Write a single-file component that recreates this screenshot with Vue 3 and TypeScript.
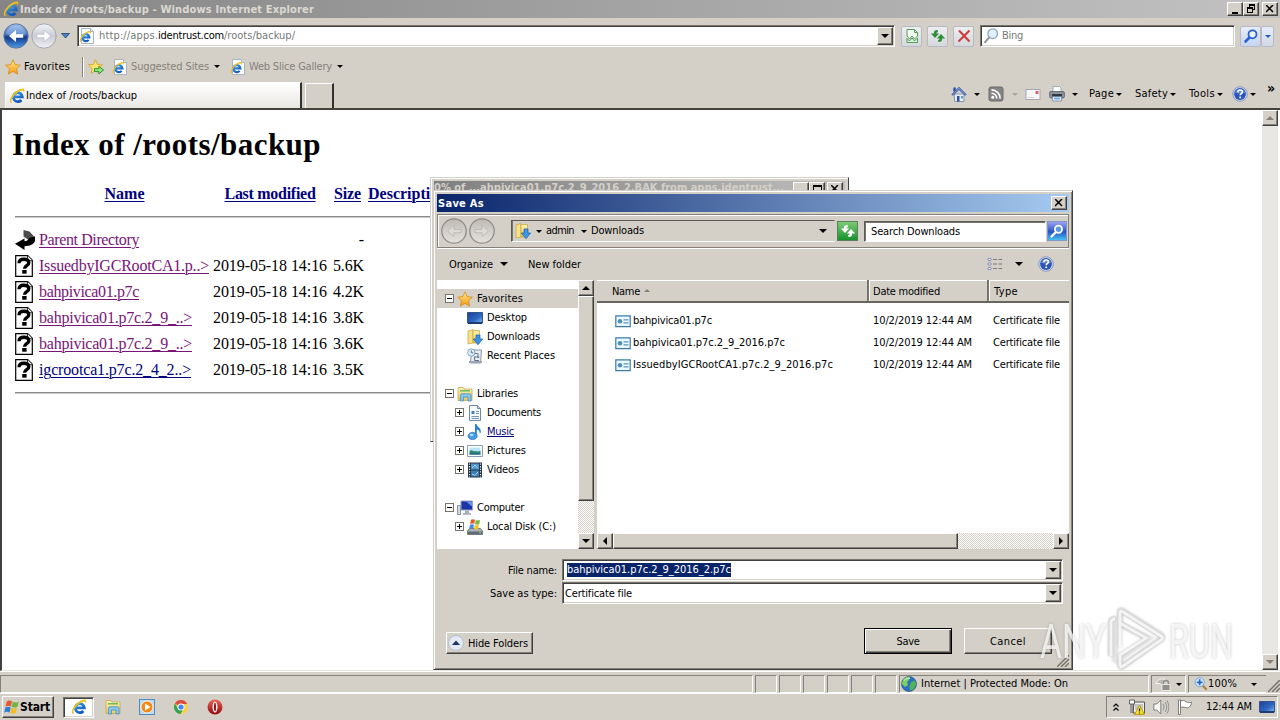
<script setup lang="ts">
interface Entry { name: string; w: number; size: string; fresh?: boolean }
interface Node { label: string; w: number; icon: string; level: number; box?: string; hot?: boolean; link?: boolean; gap?: boolean }

const vFit = {
  mounted(el: HTMLElement, binding: { value: number }) {
    const natural = el.getBoundingClientRect().width
    const count = (el.textContent ?? '').length
    if (count > 0) el.style.letterSpacing = `${(binding.value - natural) / count}px`
    el.style.width = `${binding.value}px`
  },
}

const entries: Entry[] = [
  { name: 'IssuedbyIGCRootCA1.p..>', w: 170, size: '5.6K' },
  { name: 'bahpivica01.p7c', w: 100, size: '4.2K' },
  { name: 'bahpivica01.p7c.2_9_..>', w: 153, size: '3.8K' },
  { name: 'bahpivica01.p7c.2_9_..>', w: 153, size: '3.6K' },
  { name: 'igcrootca1.p7c.2_4_2..>', w: 152, size: '3.5K', fresh: true },
]

const tree: Node[] = [
  { label: 'Favorites', w: 46, icon: 'star', level: 0, box: '-', hot: true },
  { label: 'Desktop', w: 40, icon: 'desktop', level: 1 },
  { label: 'Downloads', w: 53, icon: 'downloads', level: 1 },
  { label: 'Recent Places', w: 68, icon: 'recent', level: 1 },
  { label: '', w: 0, icon: '', level: 0, gap: true },
  { label: 'Libraries', w: 41, icon: 'folder', level: 0, box: '-' },
  { label: 'Documents', w: 54, icon: 'doc', level: 1, box: '+' },
  { label: 'Music', w: 27, icon: 'music', level: 1, box: '+', link: true },
  { label: 'Pictures', w: 39, icon: 'picture', level: 1, box: '+' },
  { label: 'Videos', w: 32, icon: 'video', level: 1, box: '+' },
  { label: '', w: 0, icon: '', level: 0, gap: true },
  { label: 'Computer', w: 47, icon: 'computer', level: 0, box: '-' },
  { label: 'Local Disk (C:)', w: 69, icon: 'disk', level: 1, box: '+' },
]

const files = [
  { name: 'bahpivica01.p7c', w: 79 },
  { name: 'bahpivica01.p7c.2_9_2016.p7c', w: 152 },
  { name: 'IssuedbyIGCRootCA1.p7c.2_9_2016.p7c', w: 200 },
]
</script>

<template>
  <div class="screen">
    <svg class="sprite" width="0" height="0">
      <defs>
        <linearGradient id="gBlue" x1="0" y1="0" x2="0" y2="1"><stop offset="0" stop-color="#9dc0ec" /><stop offset=".45" stop-color="#3c6cbc" /><stop offset=".55" stop-color="#123a8c" /><stop offset="1" stop-color="#4f9be6" /></linearGradient>
        <linearGradient id="gGrey" x1="0" y1="0" x2="0" y2="1"><stop offset="0" stop-color="#f4f5f8" /><stop offset=".5" stop-color="#c9ccd4" /><stop offset="1" stop-color="#f2f3f6" /></linearGradient>
        <linearGradient id="gFlat" x1="0" y1="0" x2="0" y2="1"><stop offset="0" stop-color="#bdbab4" /><stop offset=".5" stop-color="#d2cfc9" /><stop offset="1" stop-color="#e4e1dc" /></linearGradient>
        <linearGradient id="gStar" x1="0" y1="0" x2="0" y2="1"><stop offset="0" stop-color="#ffe98a" /><stop offset="1" stop-color="#f59a12" /></linearGradient>
        <linearGradient id="gE" gradientUnits="userSpaceOnUse" x1="4" y1="3" x2="12" y2="15"><stop offset="0" stop-color="#3fa9f0" /><stop offset="1" stop-color="#0c4db4" /></linearGradient>
        <linearGradient id="gFold" x1="0" y1="0" x2="0" y2="1"><stop offset="0" stop-color="#fdf3b4" /><stop offset="1" stop-color="#e8c95e" /></linearGradient>
        <linearGradient id="gScr" x1="0" y1="0" x2="1" y2="1"><stop offset="0" stop-color="#1c3f8e" /><stop offset=".6" stop-color="#2f68c4" /><stop offset="1" stop-color="#8ac0f4" /></linearGradient>
        <linearGradient id="gRed" x1="0" y1="0" x2="0" y2="1"><stop offset="0" stop-color="#e8645c" /><stop offset="1" stop-color="#940808" /></linearGradient>
      </defs>
      <symbol id="ie" viewBox="0 0 16 16">
        <path d="M5 8.900h8.300A4.500 4.500 0 1 0 12.300 12" fill="none" stroke="url(#gE)" stroke-width="2.800" />
        <path d="M2 15C-1 13.500 2.500 6.500 8 2.800 12 .1 15.800-.3 15.400 2.600c0 .8-.3 1.400-.7 2.100.2-1.900-.8-2.600-2.600-2C9 3.600 5 7.200 3 10.800c-1.200 2.200-1 3.600.6 3.200" fill="#efbe1c" />
      </symbol>
      <symbol id="iepage" viewBox="0 0 16 16">
        <path d="M2.500.5h9l3 3v12h-12z" fill="#fbfcfe" stroke="#a8b4c6" /><path d="M11.500.5v3h3" fill="#dde6f2" stroke="#a8b4c6" />
        <use href="#ie" x="0" y="2.500" width="12.500" height="12.500" />
      </symbol>
      <symbol id="star" viewBox="0 0 16 16"><path d="M8 .8l2.200 4.900 5.200.5-3.900 3.600 1.200 5.300L8 12.400l-4.700 2.700 1.200-5.300L.6 6.200l5.200-.5z" fill="url(#gStar)" stroke="#d58a18" stroke-width=".8" /></symbol>
      <symbol id="staradd" viewBox="0 0 16 16"><path d="M7.500.8l2 4.600 5 .5-3.700 3.500 1.100 5-4.400-2.500-4.500 2.500 1.100-5L.5 5.900l5-.5z" fill="#ffe570" stroke="#cfa01e" stroke-width=".8" /><path d="M6.500 9.600h4.300V7.300L15.600 11l-4.800 3.900v-2.400H6.500z" fill="#8ee27a" stroke="#278d2c" stroke-width=".9" /></symbol>
      <symbol id="home" viewBox="0 0 16 16"><path d="M3.500 8h9.500v7.500H3.500z" fill="#e8edf6" stroke="#8795b5" /><path d="M2.300 1.500h2.500v4H2.300z" fill="#3450a8" /><path d="M8 1.200L.8 8.500l1.200.8L8 3.600l6 5.700 1.200-.8z" fill="#6f93d8" stroke="#263f94" stroke-width=".7" /><path d="M6 10h2.500v5.500H6z" fill="#2b4fa2" /><path d="M10 10h2v2.500h-2z" fill="#57a0d6" /></symbol>
      <symbol id="rss" viewBox="0 0 16 16"><rect x="1" y="1" width="14" height="14" rx="2" fill="#858585" stroke="#6a6a6a" /><circle cx="4.800" cy="11.200" r="1.500" fill="#fff" /><path d="M3.500 7.200a5.300 5.300 0 0 1 5.300 5.300M3.500 3.900a8.600 8.600 0 0 1 8.600 8.600" fill="none" stroke="#fff" stroke-width="1.600" /></symbol>
      <symbol id="mail" viewBox="0 0 16 16"><rect x="1" y="3.500" width="14" height="10" fill="#f7f7fa" stroke="#aaa5b3" /><path d="M3 11.500h6" stroke="#d4d4df" /><rect x="10.500" y="5" width="3" height="3" fill="#d7627a" /></symbol>
      <symbol id="printer" viewBox="0 0 16 16"><path d="M4 .5h6.500L12 2v5H4z" fill="#fff" stroke="#8594a5" stroke-width=".7" /><rect x=".6" y="5.500" width="14.800" height="6.500" rx="1.500" fill="#8c939d" stroke="#555c66" stroke-width=".8" /><path d="M3 8h10v3H3z" fill="#343a44" /><path d="M3.500 10.500h9v4.500h-9z" fill="#e8f2fc" stroke="#6b7887" stroke-width=".7" /><path d="M5 12.500h6" stroke="#6ab0e4" stroke-width="2" /></symbol>
      <symbol id="help" viewBox="0 0 16 16"><circle cx="8" cy="8" r="7.300" fill="#cbd6ee" stroke="#7c8cb4" stroke-width=".8" /><circle cx="8" cy="8" r="5.900" fill="#2a55b8" /><path d="M3 6.500a5.500 5.500 0 0 1 10 0c-3 1.500-7 1.500-10 0z" fill="#7d9fe0" opacity=".7" /><path d="M5.800 6.200C5.900 4.600 7 4 8.100 4c1.300 0 2.300.8 2.300 2 0 1.700-2.200 1.700-2.200 3.200" fill="none" stroke="#fff" stroke-width="1.600" /><rect x="7.300" y="10.500" width="1.800" height="1.700" fill="#fff" /></symbol>
      <symbol id="glass" viewBox="0 0 16 16"><path d="M1.500 14.800l5-6" stroke="#8f9499" stroke-width="2" /><circle cx="9.700" cy="5.700" r="4.800" fill="#dff1fb" stroke="#8fa8b8" stroke-width="1.300" /></symbol>
      <symbol id="glassblue" viewBox="0 0 16 16"><path d="M2.500 13.500l4-4" stroke="#2c5fd2" stroke-width="2.600" stroke-linecap="round" /><circle cx="9.500" cy="6.300" r="4" fill="#e9f3fe" stroke="#2c5fd2" stroke-width="1.800" /></symbol>
      <symbol id="glasswhite" viewBox="0 0 16 16"><path d="M2.500 13.500l4-4" stroke="#fff" stroke-width="2.400" stroke-linecap="round" /><circle cx="9.500" cy="6.300" r="3.600" fill="#5b97e0" stroke="#fff" stroke-width="1.800" /></symbol>
      <symbol id="compat" viewBox="0 0 16 16"><path d="M3 1.500h7.500l3 3v3.500l-3 3-2.500-3-2.500 3-2.500-3z" fill="#f3fbf2" stroke="#4f9d58" /><path d="M10.500 1.500v3h3" fill="none" stroke="#4f9d58" /><path d="M3 14.500v-4l2.500 2.500L8 10l2.500 3 3-3v4.500z" fill="#dff3dd" stroke="#4f9d58" /></symbol>
      <symbol id="reload" viewBox="0 0 16 16"><path d="M7.500 2C5.300 1.800 3.900 2.600 3.800 5.500H.8L5 10l4.200-4.500H6.500c0-1 .4-1.500 1.600-1.600z" fill="currentColor" /><path d="M8.500 14c2.200.2 3.600-.6 3.700-3.500h3L11 6l-4.200 4.500h2.700c0 1-.4 1.500-1.600 1.600z" fill="currentColor" /></symbol>
      <symbol id="stop" viewBox="0 0 16 16"><path d="M3 2.500l10.500 11M13.500 2.500L2.500 13.500" stroke="#c8403c" stroke-width="2.100" /></symbol>
      <symbol id="orbback" viewBox="0 0 26 26"><circle cx="13" cy="13" r="12.200" fill="url(#gBlue)" stroke="#667a9c" /><path d="M3 11a10.200 10.200 0 0 1 20 0c-6 2-14 2-20 0z" fill="#c4daf5" opacity=".35" /><path d="M6 13l7-6v4.200h7.200v3.600H13V19z" fill="#fff" /></symbol>
      <symbol id="orbfwd" viewBox="0 0 26 26"><circle cx="13" cy="13" r="12.200" fill="url(#gGrey)" stroke="#a1a5ad" /><path d="M20 13l-7-6v4.200H5.800v3.600H13V19z" fill="#fff" stroke="#b3b8c6" stroke-width=".7" /></symbol>
      <symbol id="orbl" viewBox="0 0 26 26"><circle cx="13" cy="13" r="12.200" fill="url(#gFlat)" stroke="#8f8d89" stroke-width="1.300" /><path d="M6.500 13l6.500-5.500v4H20v3.200h-7v3.800z" fill="#dedbd6" stroke="#b8b5af" stroke-width=".8" /></symbol>
      <symbol id="orbr" viewBox="0 0 26 26"><circle cx="13" cy="13" r="12.200" fill="url(#gFlat)" stroke="#8f8d89" stroke-width="1.300" /><path d="M19.500 13L13 7.500v4H6v3.200h7v3.800z" fill="#dedbd6" stroke="#b8b5af" stroke-width=".8" /></symbol>
      <symbol id="parent" viewBox="0 0 20 20"><path d="M8.500 0l6 1.500L19.500 7l-5 3.500-6-4z" fill="#4c4c4c" /><path d="M14 8l6-1.500v4.500c-1.500 3.500-5 5-10.500 5.200V20L0 13.800 9.500 8.500v2.700c2.500 0 4-1.200 4.500-3.200z" fill="#000" /></symbol>
      <symbol id="unknown" viewBox="0 0 18 22"><path d="M.7.700h12l4.600 4.600v16H.7z" fill="#fff" stroke="#000" stroke-width="1.200" /><path d="M12.500.700v5h5" fill="#fff" stroke="#000" stroke-width=".8" /><path d="M4 8.200c.1-2.800 2-4 4.800-4 3.200 0 5 1.300 5 3.500 0 3.100-4.300 2.800-4.300 6" fill="none" stroke="#000" stroke-width="3.400" /><rect x="7.200" y="15" width="4.400" height="3.700" fill="#000" /></symbol>
      <symbol id="desktop" viewBox="0 0 16 16"><path d="M.5 2.500h15v10.500H.5z" fill="url(#gScr)" stroke="#33548c" /><path d="M1 12h14v2H1z" fill="#1f3c70" /></symbol>
      <symbol id="downloads" viewBox="0 0 16 16"><path d="M1 2l5-1.500V14L1 15z" fill="#f7e08a" stroke="#c9a23a" stroke-width=".7" /><path d="M6 1.500h6.500V14H6z" fill="url(#gFold)" stroke="#c9a23a" stroke-width=".7" /><path d="M9 6h4v4h2.700L11 15.700 6.300 10H9z" fill="#3a96e4" stroke="#1c5dae" stroke-width=".7" /></symbol>
      <symbol id="recent" viewBox="0 0 16 16"><path d="M4.500 2h10l-1 13h-10z" fill="#e9edf1" stroke="#7f8b99" stroke-width=".9" /><circle cx="4.300" cy="4.500" r="3.700" fill="#dfeffa" stroke="#71a0c4" stroke-width=".9" /><path d="M4.300 2.300v2.500h2M7 9h5.500M8 5.500h2.500M11 5v5M7.500 9v3.500H12" fill="none" stroke="#61758d" stroke-width="1" /><path d="M2 13h13v2H2z" fill="#9aa6b2" /></symbol>
      <symbol id="folder" viewBox="0 0 16 16"><path d="M1 1.500h5l1 1.500h8v11.500H1z" fill="url(#gFold)" stroke="#c8a848" stroke-width=".8" /><path d="M3 4h10v1.500H3z" fill="#69bb65" /><path d="M3.500 15V9.300c0-1 .6-1.500 1.500-1.500h7.500c.9 0 1.500.5 1.500 1.500V15h-3v-4H6.500v4z" fill="#88c7ef" stroke="#468dc0" stroke-width=".8" /></symbol>
      <symbol id="doc" viewBox="0 0 16 16"><path d="M2.500.5h8l3 3v12h-11z" fill="#f6f9fc" stroke="#7189a5" /><path d="M10.500.5v3h3" fill="#c9d8ea" stroke="#7189a5" /><path d="M4.500 6h3v3h-3z" fill="#477fbd" /><path d="M9 6.500h3M9 8.500h3M4.500 11.500H12M4.500 13.500H12" stroke="#7697bb" /></symbol>
      <symbol id="music" viewBox="0 0 16 16"><path d="M8 12V0h1.500c.4 3 4.500 3.600 4.300 7.400-.1 1-.4 1.900-1 2.700.4-3-1.200-4.200-3-4.600V12" fill="#2b7ed2" /><ellipse cx="5.600" cy="12" rx="4.600" ry="3.600" fill="#3e9ee8" stroke="#2265b4" stroke-width=".7" /><ellipse cx="4.600" cy="11" rx="1.800" ry="1.200" fill="#b5e0fa" /></symbol>
      <symbol id="picture" viewBox="0 0 16 16"><path d="M.5 2.500h15v11H.5z" fill="#fff" stroke="#8b9daf" /><path d="M2.500 4.500h11v7h-11z" fill="#bae5f7" /><path d="M2.500 8c2-2 4 1 6 0 2 1 3 0 5 0v3.500h-11z" fill="#2f8577" /><path d="M2.500 10.500h11v1h-11z" fill="#1f5f8a" /></symbol>
      <symbol id="video" viewBox="0 0 16 16"><path d="M1 .5h14v15H1z" fill="#25303d" /><path d="M4 1.500h8v6H4z" fill="#4c96d2" /><path d="M4 8.500h8v6H4z" fill="#3a7fb8" /><path d="M5 6l3-3 3 3.500M5 12l3 1.500L11 10" stroke="#a8d6ea" fill="none" /><path d="M2.500 1.500v14M13.500 1.500v14" stroke="#e8ecf0" stroke-width="1.200" stroke-dasharray="1.300 1.300" /></symbol>
      <symbol id="computer" viewBox="0 0 16 16"><path d="M.5 5.500h3v9h-3z" fill="#d4dbe2" stroke="#6e7984" stroke-width=".8" /><path d="M4 1h11.500v9H4z" fill="#1b34a8" stroke="#92a2bc" /><path d="M9 1.500h6v5z" fill="#6790e8" /><path d="M8 10.500h4V13H8zM6 13h8v1.700H6z" fill="#a5afba" /></symbol>
      <symbol id="disk" viewBox="0 0 16 16"><path d="M2.500 9.500h11l2 2.500v3.500H.5V12z" fill="#aab2b8" stroke="#5b666f" stroke-width=".8" /><path d="M1 12.500h14v2.500H1z" fill="#5e6b74" /><circle cx="13" cy="13.700" r=".8" fill="#7cf06a" /><path d="M4 .8c1.500-.9 2.700-.7 4 0L7.200 5c-1.300-.7-2.700-.6-4 0z" fill="#e8582c" /><path d="M8.800 1.100c1.300.7 2.700.6 4.200 0L12.200 5.300c-1.300.7-2.700.6-4.200 0z" fill="#78b83c" /><path d="M3 5.700c1.500-.7 2.700-.7 4 0l-.8 4c-1.300-.6-2.700-.6-4 0z" fill="#3e8edc" /><path d="M7.800 6c1.300.7 2.700.6 4.200 0L11.200 10c-1.300.6-2.700.6-4.200 0z" fill="#f5c328" /></symbol>
      <symbol id="cert" viewBox="0 0 16 16"><path d="M.8 2.800h14.400v10.900H.8z" fill="#edf7fe" stroke="#397ca8" stroke-width="1.200" /><circle cx="5" cy="8.200" r="2.300" fill="#4b91bf" /><path d="M8.500 6.800h5M8.500 9.800h5" stroke="#5b97bb" stroke-width="1.300" /></symbol>
      <symbol id="views" viewBox="0 0 16 16"><path d="M1 2.500h3v2H1zM1 7h3v2H1zM1 11.500h3v2H1z" fill="#fff" stroke="#8292b8" /><path d="M6 3.500h4M11.500 3.500H15M6 8h4M11.500 8H15M6 12.500h4M11.500 12.500H15" stroke="#77797f" stroke-width="1.200" /></symbol>
      <symbol id="up" viewBox="0 0 16 16"><circle cx="8" cy="8" r="7.500" fill="#e3eaf4" stroke="#a8b7ce" stroke-width=".8" /><path d="M4 10l4-4.500L12 10z" fill="#1c3764" /></symbol>
      <symbol id="win" viewBox="0 0 16 16"><path d="M2.700 2.500C4.700 1 6.200 1.200 8 2.300L6.900 7.500C5 6.400 3.500 6.300 1.600 7.500z" fill="#e2582f" /><path d="M8.800 2.800c2 1.100 3.700 1 5.900-.1l-1.300 5c-2 1.100-3.800 1.100-5.700.1z" fill="#6fb440" /><path d="M1.400 8.500c1.900-1.200 3.500-1.100 5.300 0l-1.200 5.200C3.700 12.600 2.100 12.500.2 13.700z" fill="#2f7ed6" /><path d="M7.500 8.800c1.900 1.100 3.600 1 5.600 0l-1.200 5c-2 1.100-3.700 1.200-5.600.1z" fill="#f4bd24" /></symbol>
      <symbol id="wmp" viewBox="0 0 16 16"><rect x=".5" y=".5" width="15" height="15" fill="#b9dbf4" stroke="#518cc0" /><circle cx="8" cy="8" r="6" fill="#f28a17" stroke="#fff" stroke-width=".8" /><path d="M6 4.500L11.500 8 6 11.500z" fill="#fff" /></symbol>
      <symbol id="chrome" viewBox="0 0 16 16"><circle cx="8" cy="8" r="7" fill="#fad141" /><path d="M8 8L1.900 4.500A7 7 0 0 1 14.200 5H8z" fill="#dd4b3e" /><path d="M1.900 4.500A7 7 0 0 0 7.500 15L10.800 9.500 8 8 5 9.500z" fill="#34a353" /><circle cx="8" cy="8" r="3.500" fill="#fff" /><circle cx="8" cy="8" r="2.600" fill="#4285f4" /></symbol>
      <symbol id="opera" viewBox="0 0 16 16"><circle cx="8" cy="8" r="7.500" fill="url(#gRed)" /><ellipse cx="8" cy="8" rx="2.500" ry="5.600" fill="#f8eeee" /><ellipse cx="8" cy="8" rx="1" ry="4.300" fill="#8e1212" /></symbol>
      <symbol id="globe" viewBox="0 0 16 16"><circle cx="8" cy="8" r="7.500" fill="#2b6fc2" stroke="#224c7e" stroke-width=".6" /><path d="M2 4c2-3 5-3.500 7-3l-1 3-2 2 1 3-3 2-2-2-1.300-1z" fill="#7bd15c" /><path d="M10 6l4-1.500 1 4-2.500 5-3.500 1-.5-4z" fill="#53b454" /><path d="M3 4.500c2-2 4-2.500 6-2" stroke="#cdf0fb" fill="none" /></symbol>
      <symbol id="shield" viewBox="0 0 16 16"><path d="M.8 7.500c2-4 4.700-4.700 9-4.500l-1 5.500-2 .5-2-1.500z" fill="#bbb9b5" stroke="#fff" stroke-width=".8" /><path d="M8.500 9V7a2.500 2.500 0 0 1 5 0v2" fill="none" stroke="#8e8c88" stroke-width="1.400" /><path d="M7 8.500h8v6H7z" fill="#92908c" stroke="#fff" stroke-width=".7" /></symbol>
      <symbol id="zoom" viewBox="0 0 16 16"><path d="M9.500 9.500l5 5" stroke="#b07f44" stroke-width="2.400" /><circle cx="6.500" cy="6" r="5.200" fill="#d7eafd" stroke="#6f9ed0" /><path d="M6.500 2.700v6.600M3.200 6h6.600" stroke="#2468ce" stroke-width="2" /></symbol>
      <symbol id="net" viewBox="0 0 16 16"><path d="M5 3h10.500v11H4z" fill="#eee" stroke="#555" /><path d="M6 5h8v6H6z" fill="#c5c5c0" /><path d="M.5 1h5v4h-5zM2 5v9M4 5v9" fill="#fff" stroke="#555" stroke-width=".9" /><path d="M10.500 6.500l5 9h-10z" fill="#f7e226" stroke="#ad8a08" stroke-width=".8" /><path d="M10.500 9.500v3M10.500 13.500v1" stroke="#222" stroke-width="1.200" /></symbol>
      <symbol id="sound" viewBox="0 0 16 16"><path d="M.8 5h3l4-4v14l-4-4h-3z" fill="#f5f5f3" stroke="#777" stroke-width=".9" /><path d="M10 5c1.200 1.800 1.200 4.200 0 6M12 3c2.200 3 2.200 7 0 10M14 1.500c2.400 4 2.400 9 0 13" stroke="#888" fill="none" stroke-width=".9" /></symbol>
      <symbol id="flag" viewBox="0 0 16 16"><path d="M1.500 1h2v14.500h-2z" fill="#fff" stroke="#666" stroke-width=".8" /><path d="M3.500 2c2-1 4.500-.5 5.500.8 1.500 1 4 1 5.500.4-.2 3-2 5.800-4.500 5.600-1.500-.1-4-1.500-6.500-.3z" fill="#fff" stroke="#666" stroke-width=".8" /></symbol>
    </svg>

    <header class="titlebar">
      <svg class="ic"><use href="#ie" /></svg>
      <span v-fit="294" class="t bold">Index of /roots/backup - Windows Internet Explorer</span>
      <div class="caption">
        <span class="cap"><i class="g-min" /></span>
        <span class="cap"><i class="g-rest a" /><i class="g-rest b" /></span>
        <span class="cap far"><svg viewBox="0 0 8 8"><path d="M0 0l7 7M7 0L0 7" /></svg></span>
      </div>
    </header>

    <div class="nav">
      <svg class="orb"><use href="#orbback" /></svg>
      <svg class="orb fwd"><use href="#orbfwd" /></svg>
      <svg class="navdrop" viewBox="0 0 9 6"><path d="M.5.5h8L4.500 5z" /></svg>
      <div class="address sunk">
        <svg class="ic"><use href="#iepage" /></svg>
        <span class="url"><span v-fit="59" class="t">http://apps.</span><span v-fit="66" class="t host">identrust.com</span><span v-fit="71" class="t">/roots/backup/</span></span>
        <span class="combo"><i class="dn" /></span>
      </div>
      <span class="tool first"><svg class="ic"><use href="#compat" /></svg></span>
      <span class="tool green"><svg class="ic"><use href="#reload" /></svg></span>
      <span class="tool"><svg class="ic"><use href="#stop" /></svg></span>
      <div class="bing sunk"><svg class="ic"><use href="#glass" /></svg><span v-fit="21" class="t">Bing</span></div>
      <span class="tool go"><svg class="ic"><use href="#glassblue" /></svg></span>
      <span class="tool drop"><i class="dn blue" /></span>
    </div>

    <div class="favbar">
      <svg class="ic"><use href="#star" /></svg>
      <span v-fit="46" class="t">Favorites</span>
      <i class="vsep" />
      <svg class="ic add"><use href="#staradd" /></svg>
      <svg class="ic pg"><use href="#iepage" /></svg>
      <span v-fit="78" class="t dim">Suggested Sites</span><i class="dn sm" />
      <svg class="ic pg2"><use href="#iepage" /></svg>
      <span v-fit="83" class="t dim">Web Slice Gallery</span><i class="dn sm" />
    </div>

    <div class="tabrow">
      <div class="tab"><svg class="ic"><use href="#ie" /></svg><span v-fit="111" class="t">Index of /roots/backup</span></div>
      <div class="newtab" />
      <div class="cmds">
        <svg class="ic"><use href="#home" /></svg><i class="dn sm c1" />
        <svg class="ic c2"><use href="#rss" /></svg><i class="dn sm c3 grey" />
        <svg class="ic c4"><use href="#mail" /></svg>
        <svg class="ic c5"><use href="#printer" /></svg><i class="dn sm c1" />
        <span v-fit="25" class="t c6">Page</span><i class="dn sm c7" />
        <span v-fit="33" class="t c8">Safety</span><i class="dn sm c7" />
        <span v-fit="26" class="t c8">Tools</span><i class="dn sm c7" />
        <svg class="ic c9"><use href="#help" /></svg><i class="dn sm c10" />
        <span class="t more">»</span>
      </div>
    </div>

    <main class="view">
      <article class="page">
        <h1><span v-fit="309" class="t">Index of /roots/backup</span></h1>
        <div class="row head">
          <span /><span class="mid"><a v-fit="40" class="t">Name</a></span><span class="mid"><a v-fit="91" class="t">Last modified</a></span><span class="end"><a v-fit="27" class="t">Size</a></span><span class="desc"><a class="t">Descripti</a></span>
        </div>
        <hr>
        <div class="row par">
          <svg class="pic wide"><use href="#parent" /></svg><span><a v-fit="100" class="t">Parent Directory</a></span><span /><span class="end t">-</span>
        </div>
        <div v-for="(e, i) in entries" :key="i" class="row">
          <svg class="pic"><use href="#unknown" /></svg><span><a v-fit="e.w" class="t" :class="{ fresh: e.fresh }">{{ e.name }}</a></span><span><span v-fit="114" class="t">2019-05-18 14:16</span></span><span class="end"><span v-fit="31" class="t">{{ e.size }}</span></span>
        </div>
        <hr class="last">
      </article>
      <div class="vscroll"><span class="sb"><i class="upm" /></span><span class="sb"><i class="dn off" /></span></div>
    </main>

    <footer class="status">
      <span class="cell grow" /><span v-for="n in 6" :key="n" class="cell tiny" />
      <span class="cell zone"><svg class="ic"><use href="#globe" /></svg><span v-fit="147" class="t">Internet | Protected Mode: On</span></span>
      <span class="cell lock"><svg class="ic"><use href="#shield" /></svg><i class="dn sm" /></span>
      <span class="cell pct"><svg class="ic z"><use href="#zoom" /></svg><span v-fit="29" class="t">100%</span><i class="dn sm" /></span>
      <svg class="grip" viewBox="0 0 12 12"><path d="M0 12L12 0M4 12l8-8M8 12l4-4" /></svg>
    </footer>

    <footer class="taskbar">
      <span class="start raised"><svg class="ic"><use href="#win" /></svg><b v-fit="30" class="t">Start</b></span>
      <span class="pinned sunk"><svg class="ic"><use href="#ie" /></svg></span>
      <svg class="ic k1"><use href="#folder" /></svg>
      <svg class="ic k2"><use href="#wmp" /></svg>
      <svg class="ic k2"><use href="#chrome" /></svg>
      <svg class="ic k2"><use href="#opera" /></svg>
      <div class="tray">
        <svg class="chev" viewBox="0 0 6 8"><path d="M.5 3.500L3 1l2.500 2.500M.5 7.500L3 5l2.500 2.500" /></svg>
        <svg class="ic n1"><use href="#net" /></svg><svg class="ic n2"><use href="#sound" /></svg><svg class="ic n2"><use href="#flag" /></svg>
        <span v-fit="46" class="t">12:44 AM</span>
        <svg class="ic n3"><use href="#desktop" /></svg>
      </div>
    </footer>

    <section class="progress">
      <div class="ptitle"><span v-fit="350" class="t bold">0% of ...ahpivica01.p7c.2_9_2016_2.BAK from apps.identrust...</span><span class="cap" /><span class="cap"><i class="g-max" /></span><span class="cap pfar"><svg viewBox="0 0 8 8"><path d="M0 0l7 7M7 0L0 7" /></svg></span></div>
    </section>

    <section class="dialog">
      <div class="dtitle"><b v-fit="46" class="t">Save As</b><span class="cap"><svg viewBox="0 0 8 8"><path d="M0 0l7 7M7 0L0 7" /></svg></span></div>
      <div class="dnav">
        <div class="orbs"><svg class="orb"><use href="#orbl" /></svg><svg class="orb"><use href="#orbr" /></svg></div>
        <div class="crumbs">
          <svg class="ic"><use href="#downloads" /></svg><i class="dn sm x1" /><span v-fit="28" class="t">admin</span><i class="dn sm x2" /><span v-fit="53" class="t">Downloads</span><i class="dn x3" />
        </div>
        <span class="refresh"><svg class="ic"><use href="#reload" /></svg></span>
        <div class="find"><span v-fit="89" class="t">Search Downloads</span></div>
        <span class="findgo"><svg class="ic"><use href="#glasswhite" /></svg></span>
      </div>
      <div class="dtools">
        <span v-fit="44" class="t">Organize</span><i class="dn o1" /><span v-fit="53" class="t o2">New folder</span>
        <svg class="ic o3"><use href="#views" /></svg><i class="dn o4" /><svg class="ic o5"><use href="#help" /></svg>
      </div>
      <div class="panes">
        <div class="tree">
          <div v-for="(n, i) in tree" :key="i" class="node" :class="{ hot: n.hot, child: n.level === 1 }">
            <template v-if="!n.gap">
              <span class="ex" :class="{ none: !n.box, plus: n.box === '+' }" />
              <svg class="ic"><use :href="`#${n.icon}`" /></svg>
              <span v-fit="n.w" class="t" :class="{ link: n.link }">{{ n.label }}</span>
            </template>
          </div>
        </div>
        <div class="tscroll"><span class="sb"><i class="upm black" /></span><span class="thumb" /><span class="sb end"><i class="dn" /></span></div>
        <div class="list">
          <div class="cols"><span class="col cn"><span v-fit="28" class="t">Name</span><i class="upm tinyup" /></span><span class="col cd"><span v-fit="67" class="t">Date modified</span></span><span class="col ct"><span v-fit="24" class="t">Type</span></span></div>
          <div class="files">
            <div v-for="f in files" :key="f.name" class="file"><svg class="ic"><use href="#cert" /></svg><span class="fn"><span v-fit="f.w" class="t">{{ f.name }}</span></span><span class="fd"><span v-fit="99" class="t">10/2/2019 12:44 AM</span></span><span v-fit="67" class="t">Certificate file</span></div>
          </div>
          <div class="hscroll"><span class="sb"><i class="lf" /></span><span class="thumb" /><span class="sb end"><i class="rt" /></span></div>
        </div>
      </div>
      <div class="fields">
        <span v-fit="49" class="t">File name:</span><div class="input sunk"><span class="sel"><span v-fit="164" class="t">bahpivica01.p7c.2_9_2016_2.p7c</span></span><span class="combo"><i class="dn" /></span></div>
        <span v-fit="67" class="t">Save as type:</span><div class="input sunk"><span v-fit="67" class="t">Certificate file</span><span class="combo"><i class="dn" /></span></div>
      </div>
      <div class="actions">
        <span class="hide raised"><svg class="ic"><use href="#up" /></svg><span v-fit="60" class="t">Hide Folders</span></span>
        <span class="btn default"><span v-fit="23" class="t">Save</span></span>
        <span class="btn raised"><span v-fit="36" class="t">Cancel</span></span>
      </div>
      <svg class="grip dgrip" viewBox="0 0 12 12"><path d="M0 12L12 0M4 12l8-8M8 12l4-4" /></svg>
    </section>

    <svg class="mark" viewBox="0 0 240 70">
      <path class="glow" d="M82 6q0-3 3-1l38 24q3 2 0 4L85 60q-3 2-3-2v-6l28-20-28-14zM73 50V16q0-3 4-3v40l6 4" />
      <path class="tri" d="M82 18V7q0-3 3-1l38 24q3 2 0 4L85 60q-3 2-3-2v-9l26-17-26-15v24M73 50V17q0-4 4-4" />
      <g class="face"><text x="2" y="52" textLength="66" lengthAdjust="spacingAndGlyphs">ANY</text><text x="131" y="52" textLength="64" lengthAdjust="spacingAndGlyphs">RUN</text></g>
    </svg>
  </div>
</template>

<style>
html, body { margin: 0; background: #d4d0c8; overflow: hidden; }
</style>

<style scoped>
* { box-sizing: border-box; }
.screen { position: relative; width: 1280px; height: 720px; overflow: hidden; display: flex; flex-direction: column; background: #d4d0c8; color: #000; font: 11px/14px "DejaVu Sans Condensed", "DejaVu Sans", sans-serif; }
.sprite { position: absolute; }
.t { display: inline-block; white-space: pre; flex: none; }
.bold { font-weight: bold; }
.ic { width: 16px; height: 16px; flex: none; display: block; }
.dn { flex: none; width: 0; height: 0; border: 4px solid transparent; border-top-color: #000; border-bottom: 0; }
.dn.sm { border-width: 3px; border-bottom: 0; }
.dn.grey { border-top-color: #aaa69f; }
.dn.off { border-top-color: #858179; }
.dn.blue { border-width: 3px; border-bottom: 0; border-top-color: #2859b5; }
.upm { width: 0; height: 0; border: 4px solid transparent; border-bottom-color: #858179; border-top: 0; }
.upm.black { border-bottom-color: #000; }
.upm.tinyup { border-width: 3px; border-top: 0; margin: -3px 0 0 4px; }
.lf { width: 0; height: 0; border: 4px solid transparent; border-right-color: #000; border-left: 0; }
.rt { width: 0; height: 0; border: 4px solid transparent; border-left-color: #000; border-right: 0; }
.sunk { border: 1px solid; border-color: #78756f #fff #fff #78756f; box-shadow: inset 1px 1px #404040, inset -1px -1px #d4d0c8; background: #fff; }
.raised, .sb, .thumb, .cap, .combo { background: #d4d0c8; border: 1px solid; border-color: #fff #404040 #404040 #fff; box-shadow: inset -1px -1px #858179; }
.sb, .cap, .combo { display: flex; align-items: center; justify-content: center; flex: none; }
.sb { width: 16px; height: 16px; }
.cap { width: 16px; height: 14px; position: relative; }
.cap svg { width: 8px; height: 8px; stroke: #000; stroke-width: 1.500; fill: none; }

.titlebar { height: 18px; flex: none; display: flex; align-items: center; padding: 0 2px 0 3px; background: linear-gradient(90deg, #858585, #c2c2c2); color: #dcd9d3; }
.titlebar .t { margin: 1px 0 0 1px; }
.caption { margin-left: auto; display: flex; }
.far { margin-left: 3px; }
.g-min { width: 6px; height: 2px; background: #000; margin-top: 7px; }
.g-rest { position: absolute; width: 6px; height: 6px; border: 1px solid #000; border-top-width: 2px; background: #d4d0c8; }
.g-rest.a { left: 5px; top: 1px; }
.g-rest.b { left: 3px; top: 4px; }
.g-max { width: 9px; height: 9px; border: 1px solid #000; border-top-width: 2px; }

.nav { height: 36px; flex: none; display: flex; align-items: center; padding-left: 3px; }
.orb { width: 26px; height: 26px; flex: none; }
.fwd { margin-left: 2px; }
.navdrop { width: 9px; height: 6px; margin-left: 4px; fill: #4583c4; stroke: #1f4373; stroke-width: .8; }
.address { width: 818px; height: 22px; margin-left: 7px; display: flex; align-items: center; padding: 0 1px; color: #777; }
.url { margin-left: 4px; display: flex; }
.host { color: #000; }
.combo { width: 16px; height: 18px; margin-left: auto; }
.tool { width: 21px; height: 21px; flex: none; margin-left: 5px; display: flex; align-items: center; justify-content: center; border: 1px solid #b7bac3; border-radius: 2px; background: linear-gradient(#edeef0, #d7d8de); }
.tool.first { margin-left: 6px; }
.green { color: #2f8f38; }
.bing { width: 255px; height: 22px; margin-left: 6px; display: flex; align-items: center; padding-left: 2px; color: #777; }
.bing .t { margin-left: 3px; }
.go { background: linear-gradient(#e6edfa, #c6d4ee); }
.drop { width: 13px; margin-left: 0; background: linear-gradient(#e6edfa, #d2d8e6); }

.favbar { height: 25px; flex: none; display: flex; align-items: center; padding-left: 5px; }
.favbar > .t { margin-left: 3px; }
.vsep { width: 2px; height: 20px; margin-left: 12px; border-left: 1px solid #85827c; background: #fff; }
.add { margin-left: 4px; }
.pg { margin-left: 8px; }
.pg2 { margin-left: 10px; }
.favbar .dim { color: #85817a; margin: 1px 0 0 3px; }
.favbar .dn { margin-left: 5px; }

.tabrow { height: 29px; flex: none; display: flex; align-items: flex-end; padding-left: 5px; }
.tab { width: 297px; height: 26px; display: flex; align-items: center; padding-left: 3px; background: linear-gradient(#fff, #e9e7e3); border: 1px solid #fff; border-right: 2px solid #33312e; border-bottom: 0; }
.tab .t { margin: 1px 0 0 1px; }
.newtab { width: 29px; height: 25px; margin-left: 3px; border: 1px solid #fff; border-right: 2px solid #33312e; border-bottom: 0; }
.cmds { display: flex; align-items: center; height: 28px; margin-left: 617px; }
.c1 { margin-left: 7px; } .c2 { margin-left: 8px; } .c3 { margin-left: 8px; } .c4 { margin-left: 7px; } .c5 { margin-left: 8px; }
.c6 { margin-left: 11px; } .c7 { margin-left: 2px; } .c8 { margin-left: 13px; } .c9 { margin-left: 9px; } .c10 { margin-left: 2px; }
.more { margin: -12px 0 0 11px; font-size: 14px; font-weight: bold; }

.view { height: 563px; flex: none; display: flex; background: #fff; border: 2px solid #404040; border-right: 0; border-bottom: 1px solid #e8e5df; border-top: 2px solid #45423e; }
.page { flex: 1; padding: 18px 0 0 10px; font: 16px/20px "Liberation Serif", "Times New Roman", serif; }
.page h1 { margin: 0; height: 36px; font-size: 31px; line-height: 34px; }
.page hr { width: 416px; height: 2px; margin: 0 0 0 3px; border: 0; background: #8a8a8a; border-bottom: 1px solid #c9c9c9; }
.page hr.last { margin-top: 9px; }
.row { display: grid; grid-template-columns: 24px 171px 117px 37px 62px; height: 26px; align-items: center; margin-left: 3px; width: 411px; }
.row.head { height: 52px; padding: 8px 0 0; font-weight: bold; }
.row.head a { color: #000080; }
.row.par { height: 26px; margin-top: 9px; }
.row a { text-decoration: underline; text-underline-offset: 2px; text-decoration-thickness: 1px; color: #7a1478; }
.row a.fresh { color: #000080; }
.mid { text-align: center; }
.row > span:nth-child(3) { padding-left: 3px; }
.end { text-align: right; }
.row.head .end { padding-right: 3px; }
.desc { padding-left: 4px; }
.pic { width: 18px; height: 22px; }
.pic.wide { width: 20px; height: 20px; }
.vscroll { width: 16px; height: 560px; margin-right: 2px; flex: none; display: flex; flex-direction: column; justify-content: space-between; background: #e9e7e3; }

.status { height: 23px; flex: none; display: flex; padding-top: 3px; gap: 2px; border-bottom: 1px solid #fff; border-top: 1px solid #fff; }
.cell { height: 18px; display: flex; align-items: center; border: 1px solid; border-color: #85817a #fff #fff #85817a; }
.grow { width: 753px; } .tiny { width: 22px; }
.zone { width: 250px; padding-left: 1px; } .zone .t { margin-left: 4px; }
.lock { width: 35px; padding-left: 3px; gap: 5px; }
.pct { width: 78px; border-right: 0; padding-left: 5px; }
.z { width: 14px; height: 14px; } .pct .dn { margin-left: 14px; }
.grip { width: 12px; height: 12px; align-self: flex-end; stroke: #77746e; stroke-width: 1.500; margin-bottom: 1px; }

.taskbar { height: 26px; flex: none; display: flex; align-items: center; padding-left: 2px; }
.start { width: 52px; height: 22px; display: flex; align-items: center; padding-left: 1px; }
.start .t { font-size: 12px; }
.pinned { width: 31px; height: 21px; margin-left: 9px; display: flex; align-items: center; justify-content: center; }
.k1 { margin-left: 11px; } .k2 { margin-left: 18px; }
.tray { width: 172px; height: 22px; margin: 0 2px 0 auto; display: flex; align-items: center; border: 1px solid; border-color: #85817a #fff #fff #85817a; padding-left: 6px; }
.chev { width: 6px; height: 8px; fill: none; stroke: #000; stroke-width: 1.200; }
.n1 { margin-left: 10px; } .n2 { margin-left: 8px; }
.tray .t { margin-left: 13px; } .n3 { margin-left: 7px; }

.progress { position: absolute; left: 430px; top: 177px; width: 419px; height: 265px; background: #d4d0c8; border: 1px solid; border-color: #d4d0c8 #404040 #404040 #d4d0c8; box-shadow: inset 1px 1px #fff; padding: 3px; }
.ptitle { height: 18px; display: flex; align-items: flex-start; background: linear-gradient(90deg, #808080, #bdbdbd); color: #d4d0c8; padding-right: 2px; }
.ptitle .t { margin-right: auto; }
.ptitle .cap { height: 14px; margin-top: 1px; }
.pfar { margin-left: 2px; }

.dialog { position: absolute; left: 433px; top: 190px; width: 640px; height: 480px; background: #d4d0c8; border: 1px solid; border-color: #d4d0c8 #404040 #404040 #d4d0c8; box-shadow: inset 1px 1px #fff, inset -1px -1px #858179; padding: 3px; display: flex; flex-direction: column; }
.dtitle { height: 18px; flex: none; display: flex; align-items: center; justify-content: space-between; padding: 0 2px 0 1px; color: #fff; background: linear-gradient(90deg, #0a246a, #a6caf0); }
.dtitle .t { margin-top: 1px; }
.dnav { height: 34px; flex: none; margin-top: 2px; border: 1px solid #85817a; box-shadow: inset 1px 1px #fff, 0 1px #fff; display: flex; align-items: center; padding-left: 3px; }
.orbs { display: flex; gap: 2px; }
.crumbs { width: 324px; height: 22px; margin-left: 16px; display: flex; align-items: center; border: 1px solid; border-color: #5e5b56 #d4d0c8 #fff #5e5b56; box-shadow: inset 1px 0 #77746e; padding-left: 3px; }
.x1 { margin-left: 5px; } .crumbs .t { margin-left: 4px; } .x2 { margin-left: 7px; } .x3 { margin: 0 7px 0 auto; }
.refresh { width: 21px; height: 20px; margin-left: 2px; display: flex; align-items: center; justify-content: center; color: #fff; background: linear-gradient(#7ecb75, #16922b); border: 1px solid #58805a; }
.find { width: 182px; height: 21px; margin-left: 6px; display: flex; align-items: center; padding: 1px 0 0 6px; background: #fff; border: 1px solid; border-color: #5e5b56 #fff #fff #5e5b56; box-shadow: inset 1px 1px #77746e; }
.findgo { width: 20px; height: 20px; margin-left: 1px; display: flex; align-items: center; justify-content: center; background: linear-gradient(#9b9ff0, #2455c8 55%, #48c0ee); border: 1px solid #7e98c8; }
.dtools { height: 32px; flex: none; display: flex; align-items: center; padding-left: 12px; }
.dtools .t { margin-top: 1px; }
.o1 { margin-left: 7px; } .o2 { margin-left: 20px; } .o3 { margin-left: 406px; } .o4 { margin-left: 12px; } .o5 { margin-left: 15px; }
.panes { height: 269px; flex: none; display: flex; }
.tree { width: 141px; background: #fff; padding-top: 9px; }
.node { height: 19px; display: flex; align-items: center; padding-left: 8px; }
.node.child { padding-left: 18px; }
.hot { background: #d4d0c8; }
.ex { width: 9px; height: 9px; flex: none; border: 1px solid #77746e; margin-right: 3px; background: linear-gradient(#000, #000) center / 5px 1px no-repeat #fff; }
.ex.plus { background: linear-gradient(#000, #000) center / 5px 1px no-repeat, linear-gradient(#000, #000) center / 1px 5px no-repeat #fff; }
.ex.none { visibility: hidden; }
.node .t { margin: 1px 0 0 4px; }
.link { color: #000080; text-decoration: underline; }
.tscroll, .hscroll { background: repeating-conic-gradient(#fff 0 25%, #d4d0c8 0 50%) 0 0 / 2px 2px; display: flex; }
.tscroll { width: 16px; flex-direction: column; }
.tscroll .thumb { height: 205px; }
.tscroll .end { margin-top: auto; }
.list { flex: 1; margin-left: 3px; background: #fff; display: flex; flex-direction: column; }
.cols { height: 23px; display: flex; border-bottom: 2px solid #69665f; background: #d4d0c8; }
.col { display: flex; align-items: center; padding-top: 3px; border-right: 2px solid #77746e; box-shadow: inset 0 1px #fff; }
.cn { width: 272px; padding-left: 15px; } .cd { width: 120px; padding-left: 3px; border-left: 1px solid #fff; } .ct { flex: 1; padding-left: 4px; border-left: 1px solid #fff; border-right: 0; }
.files { flex: 1; padding: 7px 0 0 18px; }
.file { height: 22px; display: flex; align-items: center; }
.fn { width: 241px; padding-left: 2px; display: flex; } .fd { width: 121px; display: flex; padding-left: 1px; }
.file > .t { margin-left: 0; }
.hscroll { height: 16px; }
.hscroll .thumb { width: 345px; }
.hscroll .end { margin-left: auto; }
.fields { display: grid; grid-template-columns: 120px 501px; column-gap: 5px; row-gap: 1px; margin-top: 10px; align-items: center; justify-items: end; flex: none; }
.fields > .t, .input > .t { margin-top: 1px; }
.input { width: 501px; height: 22px; display: flex; align-items: center; padding: 0 1px 0 2px; }
.sel { background: #0a246a; color: #fff; margin-left: 2px; height: 14px; line-height: 14px; display: flex; }
.actions { display: flex; margin-top: 24px; padding-left: 9px; align-items: flex-start; flex: none; }
.hide { width: 87px; height: 22px; margin-top: 4px; display: flex; align-items: center; gap: 4px; padding-left: 1px; }
.hide .t, .btn .t { margin-top: 2px; }
.btn { width: 88px; height: 26px; display: flex; align-items: center; justify-content: center; }
.default { margin: 0 12px 0 331px; border: 1px solid #000; box-shadow: inset 1px 1px #fff, inset -1px -1px #404040, inset -2px -2px #858179; }
.dgrip { position: absolute; right: 3px; bottom: 2px; margin: 0; }
.mark { position: absolute; left: 1038px; top: 606px; width: 240px; height: 70px; fill: none; filter: drop-shadow(0 0 1.500px rgba(90, 90, 90, .45)); }
.mark text { font: 48px Roboto, "Liberation Sans", sans-serif; fill: #fff; fill-opacity: .75; }
.glow { stroke: #888; stroke-width: 7; opacity: .15; }
.tri { stroke: #fff; stroke-width: 3; opacity: .8; }
</style>
